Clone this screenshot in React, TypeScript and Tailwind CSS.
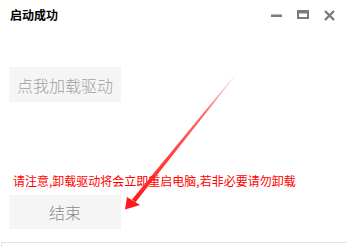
import React from 'react';

const font = { fontFamily: '"Noto Sans CJK SC", "Microsoft YaHei", sans-serif' };

export default function App() {
  return (
    <div className="relative w-[347px] h-[247px] bg-white overflow-hidden" style={font}>
      {/* title bar */}
      <div className="h-[30px] flex items-center justify-between pl-[10px] pr-[12px]">
        <span className="text-[12px] font-bold text-black leading-none">启动成功</span>
        <div className="flex items-center gap-[15px] text-[#7a7a7a]">
          <svg width="11" height="11" viewBox="0 0 11 11">
            <rect x="0" y="4.5" width="11" height="2.5" fill="currentColor" />
          </svg>
          <svg width="12" height="11" viewBox="0 0 12 11">
            <rect x="0" y="0" width="12" height="9" fill="currentColor" />
            <rect x="2" y="3.5" width="8" height="3.5" fill="#fff" />
          </svg>
          <svg width="11" height="11" viewBox="0 0 11 11">
            <path d="M1 1 L10 10 M10 1 L1 10" stroke="currentColor" strokeWidth="2.4" />
          </svg>
        </div>
      </div>

      <div className="pl-[9px]">
        <button className="mt-[37px] w-[112px] h-[35px] bg-[#f5f5f5] text-[#a0a0a0] text-[16px] font-light flex items-center justify-center">
          点我加载驱动
        </button>

        <p className="mt-[71px] pl-[4px] text-[12px] leading-[16px] text-[#ff0000] whitespace-nowrap">
          请注意,卸载驱动将会立即重启电脑,若非必要请勿卸载
        </p>

        <button className="mt-[6px] w-[112px] h-[34px] bg-[#f5f5f5] text-[#8a8a8a] text-[16px] font-light flex items-center justify-center">
          结束
        </button>
      </div>

      <div className="mt-[13px] ml-[1px] h-[20px] border-t border-l border-[#e3e3e3]" />

      {/* red annotation arrow */}
      <svg className="absolute inset-0 pointer-events-none" width="347" height="247" viewBox="0 0 347 247">
        <defs>
          <linearGradient id="shaft" x1="237" y1="73" x2="133" y2="201" gradientUnits="userSpaceOnUse">
            <stop offset="0" stopColor="#ff2a2a" stopOpacity="0" />
            <stop offset="0.3" stopColor="#ff2a2a" stopOpacity="0.7" />
            <stop offset="1" stopColor="#ff1a1a" stopOpacity="1" />
          </linearGradient>
        </defs>
        <polygon points="237.4,73.3 236.6,72.7 132,199.5 135.5,202.3" fill="url(#shaft)" />
        <polygon points="125,209.5 127,197 140,205" fill="#ff1a1a" />
      </svg>
    </div>
  );
}
